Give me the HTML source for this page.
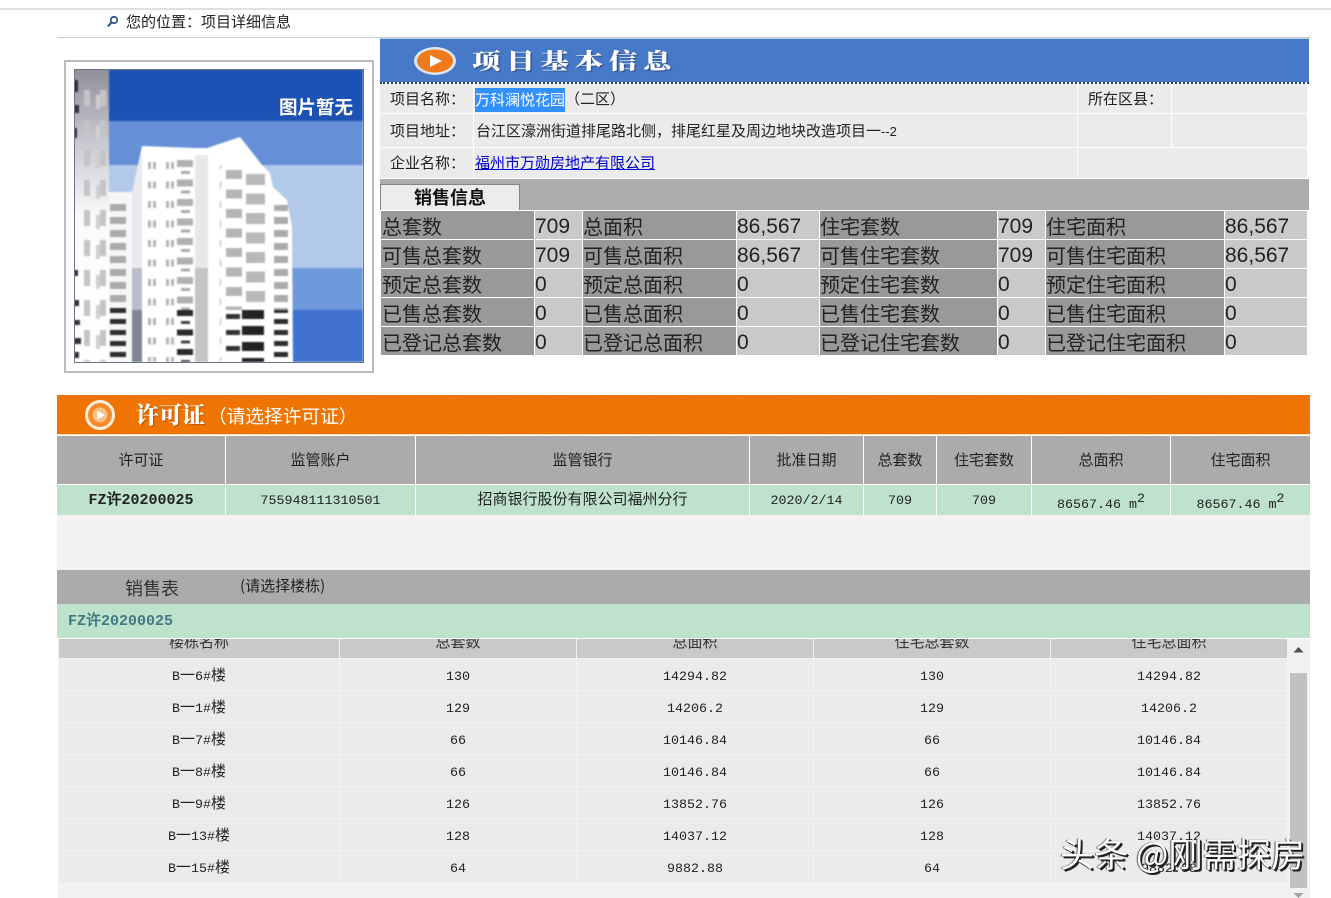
<!DOCTYPE html>
<html lang="zh"><head><meta charset="utf-8"><title>项目详细信息</title>
<style>
html,body{margin:0;padding:0;background:#fff;width:1331px;height:898px;overflow:hidden}
body{position:relative;font:15px/20px "WenQuanYi Zen Hei","Noto Sans CJK SC",sans-serif;color:#222}
.a{position:absolute}
.n{font:13.33px "Liberation Mono",monospace}
.g{position:absolute;display:grid}
.s{left:381px;top:211px;grid-template-columns:153px 47px 153px 82px 177px 47px 178px 82px;grid-auto-rows:28px;gap:1px;color:#222}
.s div{background:#c9c9c9;white-space:nowrap;overflow:hidden;font:21px/31px "Liberation Sans",sans-serif}
.s .l{background:#999;font:20px/29px "WenQuanYi Zen Hei","Noto Sans CJK SC",sans-serif}
.s .l:nth-child(8n+1){padding-left:1px}
.p{left:57px;top:436px;grid-template-columns:168px 189px 333px 113px 72px 94px 138px 139px;grid-template-rows:48px 30px;gap:1px;text-align:center}
.p .h{background:#ababab;line-height:48px;color:#222}
.p .d{background:#bfe2cc;line-height:28px}
.p sup{font:13.33px/0 "Liberation Mono",monospace;vertical-align:6px}
.t{left:59px;top:639px;grid-template-columns:280px 236px 236px 236px 236px;grid-template-rows:19px;grid-auto-rows:31px;gap:1px;text-align:center}
.t .h{background:#c9c9c9;line-height:6px;overflow:hidden;color:#333}
.t .d{background:#ebebeb;line-height:31px}
.i{position:absolute;background:#ebebeb;line-height:29px;padding-left:10px;box-sizing:border-box;white-space:nowrap}
</style></head><body>

<div class="a" style="left:0;top:8px;width:1331px;height:2px;background:#e0e0e0"></div>
<div class="a" style="left:57px;top:37px;width:1253px;height:1px;background:#ccc"></div>
<svg class="a" style="left:106px;top:15px" width="13" height="13" viewBox="0 0 13 13"><circle cx="8" cy="5" r="3.2" fill="#fff" stroke="#345a86" stroke-width="1.8"/><path d="M5.600 7.400 1.800 11.400" stroke="#345a86" stroke-width="2.200"/></svg>
<div class="a" style="left:126px;top:12px;white-space:nowrap">您的位置：项目详细信息</div>

<!-- picture -->
<div class="a" style="left:64px;top:60px;width:306px;height:309px;border:2px solid #bbb;background:#fff"></div>
<svg class="a" style="left:74px;top:69px" width="290" height="294" viewBox="74 69 290 294">
<defs>
<pattern id="w1" x="148" y="160" width="18" height="19.500" patternUnits="userSpaceOnUse"><rect x="0" y="2" width="3" height="7" fill="#b5b5b5"/><rect x="5" y="2" width="3" height="7" fill="#b5b5b5"/></pattern>
<pattern id="w2" x="177" y="160" width="16" height="19.500" patternUnits="userSpaceOnUse"><rect width="16" height="7" fill="#b0b0b0"/><rect x="4" y="11" width="9" height="3" fill="#aaa"/></pattern>
<pattern id="w2d" x="177" y="310" width="16" height="19.500" patternUnits="userSpaceOnUse"><rect width="16" height="6" fill="#2a2a2a"/><rect x="4" y="11" width="9" height="3" fill="#444"/></pattern>
<pattern id="w3" x="226" y="170" width="40" height="19.500" patternUnits="userSpaceOnUse"><rect width="16" height="9" fill="#b5b5b5"/><rect x="20" y="4" width="19" height="11" fill="#b8b8b8"/></pattern>
<pattern id="w3d" x="226" y="310" width="40" height="16" patternUnits="userSpaceOnUse"><rect y="4" width="14" height="5" fill="#333"/><rect x="16" y="0" width="22" height="9" fill="#222"/></pattern>
<pattern id="w4" x="110" y="204" width="18" height="13" patternUnits="userSpaceOnUse"><rect width="16" height="7" fill="#aaa"/></pattern>
<pattern id="w4d" x="110" y="308" width="18" height="11" patternUnits="userSpaceOnUse"><rect width="16" height="5" fill="#2c2c2c"/></pattern>
<pattern id="w5" x="84" y="90" width="16" height="30" patternUnits="userSpaceOnUse"><rect x="0" y="0" width="6" height="16" fill="#c4c4c8"/><rect x="12" y="5" width="4" height="14" fill="#cfcfd2"/></pattern>
<linearGradient id="lb" x1="0" y1="0" x2="0" y2="1"><stop offset="0" stop-color="#8f8f9a"/><stop offset=".25" stop-color="#c8c8d0"/><stop offset=".5" stop-color="#fafafa"/><stop offset="1" stop-color="#fff"/></linearGradient>
</defs>
<g style="filter:blur(.7px)">
<rect x="74" y="69" width="289" height="293" fill="#b2c9ea"/>
<rect x="74" y="69" width="289" height="52" fill="#1c52b4"/>
<rect x="74" y="121" width="289" height="44" fill="#658fd6"/>
<rect x="74" y="268" width="289" height="42" fill="#6f99dd"/>
<rect x="74" y="310" width="289" height="52" fill="#3f73cf"/>
<!-- left building -->
<rect x="74" y="69" width="35" height="293" fill="url(#lb)"/>
<rect x="84" y="90" width="25" height="272" fill="url(#w5)"/>
<path d="M74 80h4v12h-4zM74 105h5v8h-5zM74 128h3v10h-3zM74 270h4v6h-4zM74 300h5v6h-5zM74 320h6v5h-6zM74 338h7v6h-7zM74 352h5v6h-5z" fill="#333"/>
<!-- short building -->
<rect x="109" y="192" width="24" height="170" fill="#f7f7f7"/>
<rect x="110" y="204" width="18" height="104" fill="url(#w4)"/>
<rect x="110" y="308" width="18" height="54" fill="url(#w4d)"/>
<!-- main tower -->
<path d="M132 193 142 146 195 148 207 148 240 137 262 165 270 173 273 187 287 200 292 227 293 362H132z" fill="#fff"/>
<path d="M132 193 142 150V362H132z" fill="#e9e9ee"/>
<rect x="132" y="268" width="10" height="42" fill="#b9bdc8"/>
<rect x="132" y="310" width="10" height="52" fill="#7d8596"/>
<rect x="195" y="155" width="13" height="113" fill="#e8e8ea"/>
<rect x="195" y="268" width="13" height="94" fill="#c4c4c4"/>
<rect x="148" y="160" width="26" height="202" fill="url(#w1)"/>
<rect x="177" y="160" width="16" height="150" fill="url(#w2)"/>
<rect x="177" y="310" width="16" height="52" fill="url(#w2d)"/>
<rect x="213" y="165" width="8" height="197" fill="url(#w1)"/>
<rect x="226" y="170" width="40" height="140" fill="url(#w3)"/>
<rect x="226" y="310" width="40" height="52" fill="url(#w3d)"/>
<rect x="274" y="205" width="15" height="105" fill="url(#w4)"/>
<rect x="274" y="310" width="15" height="52" fill="url(#w4d)"/>
</g>
<rect x="74.500" y="69.500" width="289" height="293" fill="none" stroke="#6b7486"/>
</svg>
<div class="a" style="left:279px;top:96px;width:80px;color:#fff;font:bold 18.500px/22px 'Noto Sans CJK SC',sans-serif;white-space:nowrap">图片暂无</div>

<!-- blue header -->
<div class="a" style="left:380px;top:38px;width:929px;height:1px;background:#b6d2e4"></div>
<div class="a" style="left:380px;top:39px;width:929px;height:43px;background:#4779c9"></div>
<div class="a" style="left:380px;top:82px;width:929px;height:0;border-top:2px dotted #1f3f70"></div>
<svg class="a" style="left:413px;top:47px" width="44" height="28" viewBox="0 0 44 28"><ellipse cx="22" cy="14" rx="21" ry="14" fill="#dce4ee"/><ellipse cx="22" cy="14" rx="18" ry="11.500" fill="#ee7a1c"/><path d="M17 8 29 14 17 20z" fill="#fff"/></svg>
<div class="a" style="left:472px;top:47px;color:#fff;font:900 22px/28px 'Noto Serif CJK SC',serif;letter-spacing:4.300px;white-space:nowrap;text-shadow:1px 1px 1px #2d4d86;transform:scaleX(1.3);transform-origin:0 0">项目基本信息</div>

<!-- info -->
<div class="a" style="left:380px;top:84px;width:927px;height:95px;background:#fff"></div>
<div class="i" style="left:380px;top:84px;width:93px;height:29px">项目名称：</div>
<div class="i" style="left:474px;top:84px;width:603px;height:29px;padding-left:1px"><span style="background:#3390ff;color:#fff;display:inline-block;height:24px;line-height:24px;vertical-align:-1px">万科澜悦花园</span>（二区）</div>
<div class="i" style="left:1078px;top:84px;width:93px;height:29px">所在区县：</div>
<div class="i" style="left:1172px;top:84px;width:135px;height:29px"></div>
<div class="i" style="left:380px;top:114px;width:93px;height:33px;line-height:33px">项目地址：</div>
<div class="i" style="left:474px;top:114px;width:603px;height:33px;line-height:33px;padding-left:2px">台江区濠洲街道排尾路北侧，排尾红星及周边地块改造项目一<span style="font:13px 'Liberation Sans',sans-serif">--2</span></div>
<div class="i" style="left:1078px;top:114px;width:93px;height:33px"></div>
<div class="i" style="left:1172px;top:114px;width:135px;height:33px"></div>
<div class="i" style="left:380px;top:148px;width:93px;height:30px">企业名称：</div>
<div class="i" style="left:474px;top:148px;width:603px;height:30px;padding-left:1px"><a style="color:#00c;text-decoration:underline">福州市万勋房地产有限公司</a></div>
<div class="i" style="left:1078px;top:148px;width:229px;height:30px"></div>

<!-- sales tab -->
<div class="a" style="left:380px;top:179px;width:929px;height:31px;background:#adadad"></div>
<div class="a" style="left:380px;top:184px;width:138px;height:25px;background:#ececec;border:1px solid #858585;border-bottom:0;text-align:center;font:bold 18px/24px 'Noto Sans CJK SC',sans-serif;color:#111">销售信息</div>

<div class="g s">
<div class="l">总套数</div><div>709</div><div class="l">总面积</div><div>86,567</div><div class="l">住宅套数</div><div>709</div><div class="l">住宅面积</div><div>86,567</div>
<div class="l">可售总套数</div><div>709</div><div class="l">可售总面积</div><div>86,567</div><div class="l">可售住宅套数</div><div>709</div><div class="l">可售住宅面积</div><div>86,567</div>
<div class="l">预定总套数</div><div>0</div><div class="l">预定总面积</div><div>0</div><div class="l">预定住宅套数</div><div>0</div><div class="l">预定住宅面积</div><div>0</div>
<div class="l">已售总套数</div><div>0</div><div class="l">已售总面积</div><div>0</div><div class="l">已售住宅套数</div><div>0</div><div class="l">已售住宅面积</div><div>0</div>
<div class="l">已登记总套数</div><div>0</div><div class="l">已登记总面积</div><div>0</div><div class="l">已登记住宅套数</div><div>0</div><div class="l">已登记住宅面积</div><div>0</div>
</div>

<!-- orange header -->
<div class="a" style="left:57px;top:395px;width:1253px;height:39px;background:repeating-linear-gradient(45deg,#f57800 0 1px,#e87004 1px 2px)"></div>
<div class="a" style="left:57px;top:434px;width:1253px;height:1px;background:#fbdcae"></div>
<svg class="a" style="left:84px;top:400px" width="33" height="30" viewBox="0 0 33 30"><circle cx="16" cy="15" r="13.500" fill="#f58a2a" stroke="#fdeedd" stroke-width="3"/><circle cx="16" cy="15" r="7.500" fill="#f9c089"/><path d="M13 10.500 21 15 13 19.500z" fill="#fff"/></svg>
<div class="a" style="left:136px;top:401px;color:#fff;font:900 23px/26px 'Noto Serif CJK SC',serif;white-space:nowrap;text-shadow:1px 1px 1px #b85500">许可证</div>
<div class="a" style="left:208px;top:404px;color:#fff;font:18.700px/24px 'WenQuanYi Zen Hei','Noto Sans CJK SC',sans-serif;white-space:nowrap">（请选择许可证）</div>

<!-- permit table -->
<div class="g p">
<div class="h">许可证</div><div class="h">监管账户</div><div class="h">监管银行</div><div class="h">批准日期</div><div class="h">总套数</div><div class="h">住宅套数</div><div class="h">总面积</div><div class="h">住宅面积</div>
<div class="d"><b style="font:bold 15px/28px 'Liberation Mono','WenQuanYi Zen Hei',monospace">FZ许20200025</b></div><div class="d"><span class="n">755948111310501</span></div><div class="d">招商银行股份有限公司福州分行</div><div class="d"><span class="n">2020/2/14</span></div><div class="d"><span class="n">709</span></div><div class="d"><span class="n">709</span></div><div class="d" style="line-height:36px"><span class="n">86567.46 m<sup>2</sup></span></div><div class="d" style="line-height:36px"><span class="n">86567.46 m<sup>2</sup></span></div>
</div>

<div class="a" style="left:57px;top:515px;width:1253px;height:55px;background:#f2f2f2"></div>
<div class="a" style="left:57px;top:570px;width:1253px;height:34px;background:#ababab"></div>
<div class="a" style="left:125px;top:577px;font-size:18px;line-height:22px;color:#333;white-space:nowrap">销售表</div>
<div class="a" style="left:240px;top:576px;white-space:nowrap;color:#222">(请选择楼栋)</div>
<div class="a" style="left:57px;top:604px;width:1253px;height:34px;background:#bfe2cc"></div>
<div class="a" style="left:68px;top:612px;font:bold 15px/20px 'Liberation Mono','WenQuanYi Zen Hei',monospace;color:#3f7a80;white-space:nowrap">FZ许20200025</div>

<!-- list -->
<div class="a" style="left:58px;top:639px;width:1252px;height:259px;background:#f2f2f2"></div>
<div class="g t">
<div class="h">楼栋名称</div><div class="h">总套数</div><div class="h">总面积</div><div class="h">住宅总套数</div><div class="h">住宅总面积</div>
<div class="d"><span class="n">B</span>一<span class="n">6#</span>楼</div><div class="d"><span class="n">130</span></div><div class="d"><span class="n">14294.82</span></div><div class="d"><span class="n">130</span></div><div class="d"><span class="n">14294.82</span></div>
<div class="d"><span class="n">B</span>一<span class="n">1#</span>楼</div><div class="d"><span class="n">129</span></div><div class="d"><span class="n">14206.2</span></div><div class="d"><span class="n">129</span></div><div class="d"><span class="n">14206.2</span></div>
<div class="d"><span class="n">B</span>一<span class="n">7#</span>楼</div><div class="d"><span class="n">66</span></div><div class="d"><span class="n">10146.84</span></div><div class="d"><span class="n">66</span></div><div class="d"><span class="n">10146.84</span></div>
<div class="d"><span class="n">B</span>一<span class="n">8#</span>楼</div><div class="d"><span class="n">66</span></div><div class="d"><span class="n">10146.84</span></div><div class="d"><span class="n">66</span></div><div class="d"><span class="n">10146.84</span></div>
<div class="d"><span class="n">B</span>一<span class="n">9#</span>楼</div><div class="d"><span class="n">126</span></div><div class="d"><span class="n">13852.76</span></div><div class="d"><span class="n">126</span></div><div class="d"><span class="n">13852.76</span></div>
<div class="d"><span class="n">B</span>一<span class="n">13#</span>楼</div><div class="d"><span class="n">128</span></div><div class="d"><span class="n">14037.12</span></div><div class="d"><span class="n">128</span></div><div class="d"><span class="n">14037.12</span></div>
<div class="d"><span class="n">B</span>一<span class="n">15#</span>楼</div><div class="d"><span class="n">64</span></div><div class="d"><span class="n">9882.88</span></div><div class="d"><span class="n">64</span></div><div class="d"><span class="n">9882.88</span></div>
</div>

<!-- scrollbar -->
<div class="a" style="left:1290px;top:673px;width:17px;height:215px;background:#c1c1c1"></div>
<svg class="a" style="left:1293px;top:646px" width="11" height="7" viewBox="0 0 11 7"><path d="M.500 6.500 5.500 1 10.500 6.500z" fill="#505050"/></svg>
<svg class="a" style="left:1293px;top:893px" width="11" height="5" viewBox="0 0 11 5"><path d="M.500 0H10.500L5.500 5z" fill="#a3a3a3"/></svg>

<!-- watermark -->
<div class="a" style="left:1060px;top:831px;color:#fff;font:34.200px/42px 'Noto Sans CJK SC',sans-serif;white-space:nowrap;text-shadow:2px 2px 0 #222,1px 1px 0 #222,-1px 0 1px #555">头条 @刚需探房</div>
</body></html>
